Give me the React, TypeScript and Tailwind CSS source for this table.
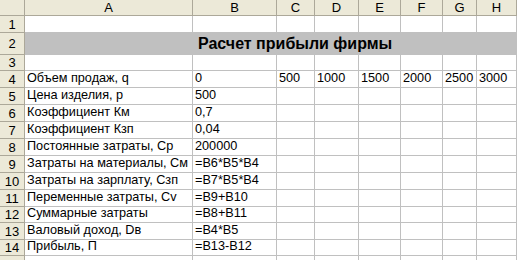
const COLS = [
  { name: "A", w: "w-[168px]" },
  { name: "B", w: "w-[84px]" },
  { name: "C", w: "w-[38px]" },
  { name: "D", w: "w-[44px]" },
  { name: "E", w: "w-[42px]" },
  { name: "F", w: "w-[42px]" },
  { name: "G", w: "w-[34px]" },
  { name: "H", w: "w-[40px]" },
];

type Row = { n: number | null; h: string; cells: string[] };

const ROWS: Row[] = [
  { n: 1, h: "h-[17px]", cells: [] },
  { n: 3, h: "h-[16px]", cells: [] },
  { n: 4, h: "h-[17px]", cells: ["Объем продаж, q", "0", "500", "1000", "1500", "2000", "2500", "3000"] },
  { n: 5, h: "h-[17px]", cells: ["Цена изделия, р", "500"] },
  { n: 6, h: "h-[17px]", cells: ["Коэффициент Км", "0,7"] },
  { n: 7, h: "h-[17px]", cells: ["Коэффициент Кзп", "0,04"] },
  { n: 8, h: "h-[17px]", cells: ["Постоянные затраты, Ср", "200000"] },
  { n: 9, h: "h-[17px]", cells: ["Затраты на материалы, См", "=B6*B5*B4"] },
  { n: 10, h: "h-[17px]", cells: ["Затраты на зарплату, Сзп", "=B7*B5*B4"] },
  { n: 11, h: "h-[17px]", cells: ["Переменные затраты, Cv", "=B9+B10"] },
  { n: 12, h: "h-[16px]", cells: ["Суммарные затраты", "=B8+B11"] },
  { n: 13, h: "h-[17px]", cells: ["Валовый доход, Dв", "=B4*B5"] },
  { n: 14, h: "h-[16px]", cells: ["Прибыль, П", "=B13-B12"] },
  // row 15 only peeks in at the bottom edge, its number is not visible
  { n: null, h: "h-[17px]", cells: [] },
];

function RowHead({ n, h }: { n: number | null; h: string }) {
  return (
    <div
      className={`${h} w-[25px] shrink-0 flex items-center justify-center bg-[#ece9d8] border-r border-b border-[#aca899] text-[13px] leading-none`}
    >
      {n}
    </div>
  );
}

function GridRow({ row }: { row: Row }) {
  return (
    <div className="flex">
      <RowHead n={row.n} h={row.h} />
      {COLS.map((c, i) => (
        <div
          key={c.name}
          className={`${row.h} ${c.w} shrink-0 flex items-end pb-[1px] pl-[2px] border-r border-b border-[#c0c0c0] bg-white whitespace-nowrap overflow-visible text-[12.7px] leading-[15px]`}
        >
          {row.cells[i] ?? ""}
        </div>
      ))}
    </div>
  );
}

export default function App() {
  const [r1, r3, ...rest] = ROWS;
  return (
    <div className="w-[517px] h-[260px] overflow-hidden bg-white text-black font-['Liberation_Sans',Arial,sans-serif]">
      {/* column headers */}
      <div className="flex">
        <div className="h-[16px] w-[25px] shrink-0 bg-[#ece9d8] border-r border-b border-[#aca899]" />
        {COLS.map((c) => (
          <div
            key={c.name}
            className={`h-[16px] ${c.w} shrink-0 flex items-center justify-center bg-[#ece9d8] border-r border-b border-[#aca899] text-[13px] leading-none`}
          >
            {c.name}
          </div>
        ))}
      </div>

      <GridRow row={r1} />

      {/* merged title row */}
      <div className="flex">
        <RowHead n={2} h="h-[22px]" />
        <div className="h-[22px] flex-1 flex items-center pl-[173px] bg-[#c0c0c0] border-b border-[#c0c0c0] text-[16px] font-bold whitespace-nowrap">
          Расчет прибыли фирмы
        </div>
      </div>

      <GridRow row={r3} />
      {rest.map((r, i) => (
        <GridRow key={i} row={r} />
      ))}
    </div>
  );
}
